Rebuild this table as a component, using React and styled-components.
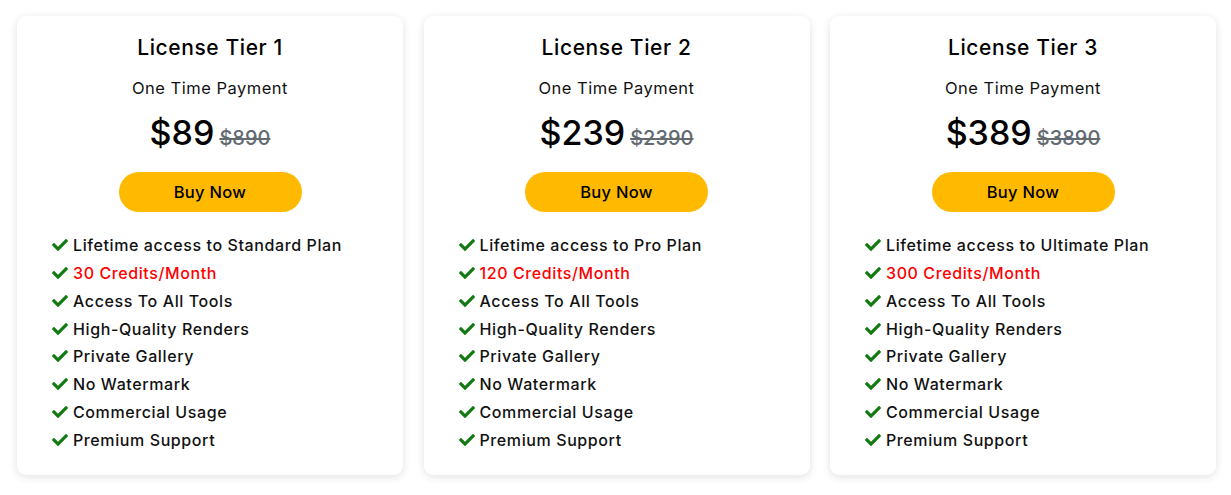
import React from 'react';
import styled, { createGlobalStyle } from 'styled-components';
import { FaCheck } from 'react-icons/fa';

const GlobalStyle = createGlobalStyle`
  body {
    margin: 0;
    background: #ffffff;
    font-family: Inter, "Noto Sans", "Liberation Sans", sans-serif;
    color: #000;
  }
`;

const tiers = [
  { name: 'License Tier 1', price: '$89', old: '$890', plan: 'Standard', credits: 30 },
  { name: 'License Tier 2', price: '$239', old: '$2390', plan: 'Pro', credits: 120 },
  { name: 'License Tier 3', price: '$389', old: '$3890', plan: 'Ultimate', credits: 300 },
];

const extras = [
  'Access To All Tools',
  'High-Quality Renders',
  'Private Gallery',
  'No Watermark',
  'Commercial Usage',
  'Premium Support',
];

export default function App() {
  return (
    <>
      <GlobalStyle />
      <Page>
        {tiers.map((t) => (
          <Card key={t.name}>
            <Title>{t.name}</Title>
            <Subtitle>One Time Payment</Subtitle>
            <PriceRow>
              <Price>{t.price}</Price>
              <OldPrice>{t.old}</OldPrice>
            </PriceRow>
            <BuyButton>Buy Now</BuyButton>
            <Features>
              <Feature>
                <Check><FaCheck /></Check>
                Lifetime access to {t.plan} Plan
              </Feature>
              <Feature $highlight>
                <Check><FaCheck /></Check>
                {t.credits} Credits/Month
              </Feature>
              {extras.map((e) => (
                <Feature key={e}>
                  <Check><FaCheck /></Check>
                  {e}
                </Feature>
              ))}
            </Features>
          </Card>
        ))}
      </Page>
    </>
  );
}

const Page = styled.div`
  display: grid;
  grid-template-columns: repeat(3, 386px);
  gap: 20.5px;
  padding: 16px 15px 20px 17px;
`;

const Card = styled.div`
  background: #fff;
  border-radius: 9px;
  box-shadow: 0 2px 8px rgba(0, 0, 0, 0.12);
  display: flex;
  flex-direction: column;
  align-items: center;
  padding: 19px 34px 22px;
  height: 459px;
  box-sizing: border-box;
`;

const Title = styled.h2`
  margin: 0;
  font-size: 21px;
  font-weight: 500;
  line-height: 26px;
  letter-spacing: 0.6px;
`;

const Subtitle = styled.div`
  margin-top: 17px;
  font-size: 16.5px;
  font-weight: 400;
  letter-spacing: 0.5px;
  color: #111;
`;

const PriceRow = styled.div`
  margin-top: 15px;
  display: flex;
  align-items: baseline;
  gap: 5px;
`;

const Price = styled.span`
  font-size: 34px;
  font-weight: 500;
  line-height: 40px;
`;

const OldPrice = styled.span`
  font-size: 20px;
  font-weight: 500;
  color: #636a72;
  text-decoration: line-through;
`;

const BuyButton = styled.button`
  margin-top: 19px;
  width: 183px;
  height: 40px;
  border: none;
  border-radius: 20px;
  background: #ffba00;
  font-family: inherit;
  font-size: 16.5px;
  font-weight: 500;
  letter-spacing: 0.3px;
  color: #000;
`;

const Features = styled.ul`
  list-style: none;
  margin: 23px 0 0;
  padding: 0 0 0 1px;
  align-self: stretch;
  display: flex;
  flex-direction: column;
  gap: 7.86px;
`;

const Feature = styled.li`
  display: flex;
  align-items: center;
  gap: 5px;
  font-size: 16px;
  font-weight: 500;
  line-height: 20px;
  letter-spacing: 0.6px;
  color: ${({ $highlight }) => ($highlight ? '#ff0000' : '#111')};
`;

const Check = styled.span`
  display: flex;
  width: 16px;
  color: #137a13;
  font-size: 16px;
`;
